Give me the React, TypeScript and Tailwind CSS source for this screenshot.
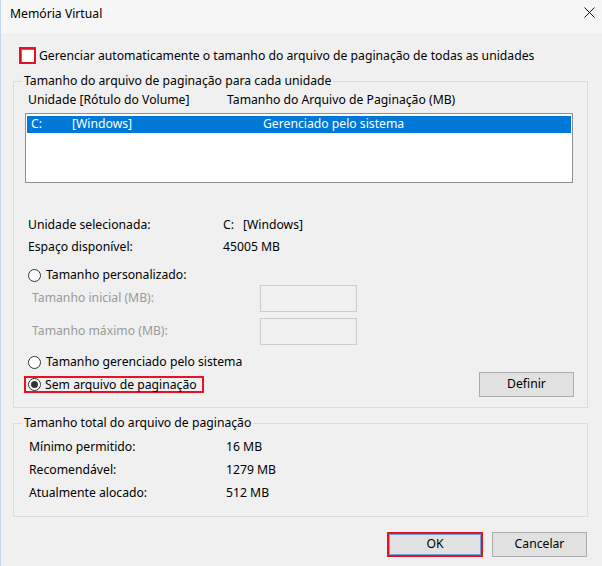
import React from "react";

function Radio({ checked }: { checked?: boolean }) {
  return (
    <span className="flex h-[13px] w-[13px] shrink-0 items-center justify-center rounded-full border border-[#333333] bg-white">
      {checked && <span className="h-[7px] w-[7px] rounded-full bg-[#333333]" />}
    </span>
  );
}

export default function App() {
  return (
    <div className="flex h-[566px] w-[602px] flex-col overflow-hidden border-l border-[#c3d7ec] bg-[#f0f0f0] font-['Noto_Sans',sans-serif] text-[12.2px] text-black">
      {/* Title bar */}
      <div className="flex h-[33px] shrink-0 items-start justify-between bg-[#f6f6f6] pl-[9px] pr-[7px]">
        <span className="mt-[5px] leading-[18px]">Memória Virtual</span>
        <svg className="mt-[7px]" width="11" height="11" viewBox="0 0 11 11">
          <path d="M0.5 0.5L10.5 10.5M10.5 0.5L0.5 10.5" stroke="#111" strokeWidth="1" />
        </svg>
      </div>

      {/* Auto manage checkbox */}
      <div className="ml-[18px] mt-[14px] flex h-[17px] items-center">
        <span className="flex h-[17px] w-[17px] shrink-0 border-2 border-[#e81123] bg-white">
          <span className="h-full w-full border-l border-t border-[#7a7a7a]" />
        </span>
        <span className="ml-[3px] leading-[16px]">
          Gerenciar automaticamente o tamanho do arquivo de paginação de todas as unidades
        </span>
      </div>

      {/* Group 1 */}
      <fieldset className="ml-[12px] mt-[9px] w-[575px] border border-[#dcdcdc] pb-[10px]">
        <legend className="ml-[8px] px-[2px] leading-[16px]">
          Tamanho do arquivo de paginação para cada unidade
        </legend>
        <div className="mt-[3px] flex pl-[14px] leading-[16px]">
          <span className="w-[199px]">Unidade [Rótulo do Volume]</span>
          <span>Tamanho do Arquivo de Paginação (MB)</span>
        </div>
        <div className="ml-[11px] mt-[5px] h-[70px] w-[548px] border border-[#8e8f8f] bg-white px-[1px] pt-[2px]">
          <div className="flex h-[17px] items-center bg-[#0078d7] text-white">
            <span className="w-[45px] pl-[4px]">C:</span>
            <span className="w-[191px]">[Windows]</span>
            <span>Gerenciado pelo sistema</span>
          </div>
        </div>

        <div className="mt-[31px] flex h-[22px] items-center pl-[14px]">
          <span className="w-[195px]">Unidade selecionada:</span>
          <span>C:</span>
          <span className="ml-[9px]">[Windows]</span>
        </div>
        <div className="flex h-[22px] items-center pl-[14px]">
          <span className="w-[195px]">Espaço disponível:</span>
          <span>45005 MB</span>
        </div>

        <div className="mt-[7px] flex h-[20px] items-center gap-[5px] pl-[14px]">
          <Radio />
          <span>Tamanho personalizado:</span>
        </div>
        <div className="flex h-[27px] items-center pl-[18px]">
          <span className="w-[228px] text-[#9a9a9a]">Tamanho inicial (MB):</span>
          <span className="h-[27px] w-[97px] border border-[#cccccc] bg-[#f0f0f0]" />
        </div>
        <div className="mt-[6px] flex h-[27px] items-center pl-[18px]">
          <span className="w-[228px] text-[#9a9a9a]">Tamanho máximo (MB):</span>
          <span className="h-[27px] w-[97px] border border-[#cccccc] bg-[#f0f0f0]" />
        </div>

        <div className="mt-[7px] flex h-[20px] items-center gap-[5px] pl-[14px]">
          <Radio />
          <span>Tamanho gerenciado pelo sistema</span>
        </div>
        <div className="flex h-[25px] items-center">
          <div className="ml-[10px] flex h-[17px] w-[180px] items-center gap-[4px] border-2 border-[#e81123] pl-[2px]">
            <Radio checked />
            <span className="whitespace-nowrap leading-[13px]">Sem arquivo de paginação</span>
          </div>
          <button className="ml-auto mr-[13px] h-[25px] w-[95px] border border-[#adadad] bg-[#e1e1e1]">
            Definir
          </button>
        </div>
      </fieldset>

      {/* Group 2 */}
      <fieldset className="ml-[12px] mt-[7px] w-[575px] border border-[#dcdcdc] pb-[11px]">
        <legend className="ml-[8px] px-[2px] leading-[16px]">
          Tamanho total do arquivo de paginação
        </legend>
        <div className="mt-[5px] flex h-[23px] items-center pl-[15px]">
          <span className="w-[197px]">Mínimo permitido:</span>
          <span>16 MB</span>
        </div>
        <div className="flex h-[23px] items-center pl-[15px]">
          <span className="w-[197px]">Recomendável:</span>
          <span>1279 MB</span>
        </div>
        <div className="flex h-[23px] items-center pl-[15px]">
          <span className="w-[197px]">Atualmente alocado:</span>
          <span>512 MB</span>
        </div>
      </fieldset>

      {/* Buttons */}
      <div className="mt-[15px] flex justify-end gap-[9px] pr-[15px]">
        <div className="flex h-[25px] w-[96px] border-2 border-[#e81123]">
          <button className="flex-1 border border-[#6aa6dc] bg-[#e1e1e1]">OK</button>
        </div>
        <button className="h-[25px] w-[95px] border border-[#adadad] bg-[#e1e1e1]">Cancelar</button>
      </div>
    </div>
  );
}
